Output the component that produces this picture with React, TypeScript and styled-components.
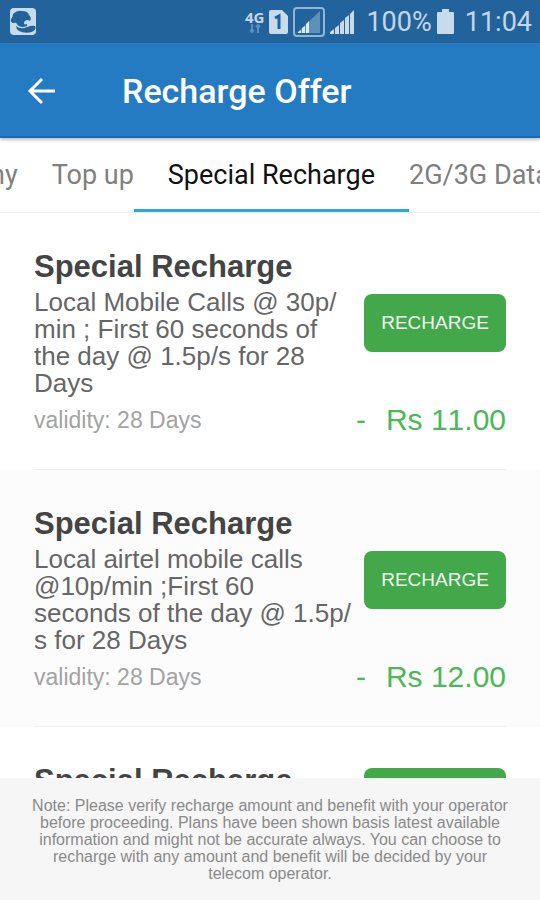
import styled, {createGlobalStyle, css} from "styled-components";

const GlobalStyle = createGlobalStyle`
* {
    box-sizing: border-box;
}
body {
    margin: 0;
    background: #ffffff;
    font-family: "Liberation Sans", Arial, sans-serif;
}
`;

const Screen = styled.div`
display: flex;
flex-direction: column;
height: 100vh;
overflow: hidden;
`;

const StatusBar = styled.div`
display: flex;
align-items: center;
justify-content: space-between;
flex-shrink: 0;
height: 43px;
padding: 0 8px 0 9px;
background: #22639b;
color: #c3d7e8;
font-family: Roboto, sans-serif;
font-size: 27px;
line-height: 32px;
`;

const StatusGroup = styled.div`
display: flex;
align-items: center;
gap: 5px;
`;

const Network = styled.div`
display: flex;
flex-direction: column;
align-items: center;
font-family: "Open Sans", sans-serif;
font-size: 15px;
font-weight: 700;
line-height: 14px;
`;

const StatusText = styled.span`
margin-left: 6px;
`;

const Header = styled.header`
display: flex;
align-items: center;
gap: 65px;
flex-shrink: 0;
height: 95px;
padding: 2px 25px 0;
background: #247bc1;
border-bottom: 2px solid #176bb0;
box-shadow: 0 2px 3px rgba(0, 0, 0, 0.25);
z-index: 1;
`;

const BackButton = styled.button`
display: flex;
padding: 0;
border: 0;
background: none;
color: #ffffff;
`;

const Heading = styled.h1`
margin: 0;
color: #ffffff;
font-family: Roboto, sans-serif;
font-size: 34px;
font-weight: 500;
line-height: 40px;
`;

const Tabs = styled.nav`
display: flex;
gap: 34px;
flex-shrink: 0;
height: 75px;
overflow: hidden;
border-bottom: 1px solid #ededed;
background: #ffffff;
`;

const Tab = styled.button<{$active?: boolean; $clipped?: boolean}>`
position: relative;
flex-shrink: 0;
padding: 0;
border: 0;
background: none;
color: #808080;
font-family: Roboto, sans-serif;
font-size: 27px;
line-height: 32px;
white-space: nowrap;
${({$clipped}) => $clipped && css`
    margin-left: -10px;
`}
${({$active}) => $active && css`
    color: #111111;
    &::after {
        content: "";
        position: absolute;
        left: -34px;
        right: -34px;
        bottom: 0;
        height: 3px;
        background: #2ba7df;
    }
`}
`;

const TabPanel = styled.main`
flex: 1;
min-height: 0;
overflow: hidden;
`;

const OfferList = styled.ul`
margin: 0;
padding: 0;
list-style: none;
`;

const OfferItem = styled.li`
padding: 0 34px;
&:nth-child(even) {
    background: #fcfcfc;
}
`;

const OfferBody = styled.article`
padding: 36px 0 31px;
border-bottom: 1px solid #f0f0f0;
`;

const OfferTop = styled.div`
display: flex;
align-items: center;
justify-content: space-between;
gap: 4px;
`;

const OfferTitle = styled.h2`
margin: 0 0 4px;
color: #444444;
font-size: 31px;
font-weight: 700;
line-height: 36px;
white-space: nowrap;
`;

const Description = styled.p`
margin: 0;
color: #666666;
font-size: 26px;
line-height: 27px;
white-space: pre-line;
`;

const RechargeButton = styled.button`
flex-shrink: 0;
width: 142px;
height: 58px;
padding: 0;
border: 0;
border-radius: 8px;
background: #42a84a;
color: #f1fbf1;
font-family: inherit;
font-size: 19px;
`;

const OfferBottom = styled.div`
display: flex;
align-items: center;
justify-content: space-between;
margin-top: 5px;
line-height: 36px;
`;

const Validity = styled.span`
color: #a3a3a3;
font-size: 23px;
`;

const Price = styled.span`
display: flex;
gap: 20px;
color: #4cb857;
font-size: 30px;
font-kerning: none;
`;

const Note = styled.footer`
flex-shrink: 0;
padding: 19px 24px 18px;
background: #f6f6f6;
color: #8a8a8a;
font-size: 16px;
line-height: 17px;
text-align: center;
`;

type Offer = {
    title: string;
    description: string;
    validity: string;
    price: string;
};

const offers: Offer[] = [
    {
        title: "Special Recharge",
        description: "Local Mobile Calls @ 30p/\nmin ; First 60 seconds of\nthe day @ 1.5p/s for 28\nDays",
        validity: "28 Days",
        price: "Rs 11.00",
    },
    {
        title: "Special Recharge",
        description: "Local airtel mobile calls\n@10p/min ;First 60\nseconds of the day @ 1.5p/\ns for 28 Days",
        validity: "28 Days",
        price: "Rs 12.00",
    },
];

const AppIcon = () => (
    <svg width="28" height="28" viewBox="0 0 28 28" aria-hidden="true">
        <rect x="1" y="0" width="26" height="27" rx="4" fill="#c8dbea" />
        <path d="M4 6 Q8 2 13 3 Q19 3 20 7 Q23 10 21 13 Q18 11 16 13 Q14 15 16 17 Q12 18 9 16 Q7 14 4 15 Q1 14 2 11 Q4 9 4 6Z" fill="#22639b" />
        <path d="M7 18 Q12 22 18 19 Q23 17 26 18 Q28 21 23 24 Q16 26 10 23 Q7 21 7 18Z" fill="#22639b" />
        <path d="M8 14 Q9 18 14 18 L18 17" stroke="#22639b" strokeWidth="2" fill="none" />
    </svg>
);

const DataArrows = () => (
    <svg width="14" height="10" viewBox="0 0 14 10" fill="none" stroke="#5f8fb8" strokeWidth="2" aria-hidden="true">
        <path d="M4 0 V8 M2 6 L4 8 L6 6 M10 9 V1 M8 3 L10 1 L12 3" />
    </svg>
);

const SimIcon = () => (
    <svg width="19" height="24" viewBox="0 0 19 24" aria-hidden="true">
        <path d="M2 0 H13 L19 6 V22 Q19 24 17 24 H2 Q0 24 0 22 V2 Q0 0 2 0Z" fill="#c8dbea" />
        <path d="M6 8 L10 6 V19" fill="none" stroke="#22639b" strokeWidth="3" />
    </svg>
);

const BoxedSignal = () => (
    <svg width="32" height="32" viewBox="0 0 32 32" aria-hidden="true">
        <rect x="1" y="2" width="30" height="28" rx="3" fill="none" stroke="#8fb6d8" strokeWidth="2" />
        <path d="M4 27 L27 5 V27Z" fill="#5f90b9" />
        <path d="M5 27 V26 L8 24 V27Z M9 27 V22 L12 20 V27Z M13 27 V18 L16 15 V27Z" fill="#dce9f3" />
    </svg>
);

const Signal = () => (
    <svg width="25" height="24" viewBox="0 0 25 24" fill="#c8dbea" aria-hidden="true">
        <path d="M0 24 V22 L4 19 V24Z M5 24 V18 L9 15 V24Z M10 24 V13 L14 10 V24Z M15 24 V8 L19 5 V24Z M20 24 V4 L24 0 V24Z" />
    </svg>
);

const Battery = () => (
    <svg width="17" height="25" viewBox="0 0 17 25" fill="#c8dbea" aria-hidden="true">
        <path d="M5 0 H12 V3 H16 Q17 3 17 4 V24 Q17 25 16 25 H1 Q0 25 0 24 V4 Q0 3 1 3 H5Z" />
    </svg>
);

const BackArrow = () => (
    <svg width="32" height="32" viewBox="0 0 32 32" fill="none" stroke="currentColor" strokeWidth="3" aria-hidden="true">
        <path d="M30 16 H5 M17 4 L5 16 L17 28" />
    </svg>
);

const OfferCard = ({title, description, validity, price}: Offer) => (
    <OfferItem>
        <OfferBody>
            <OfferTop>
                <div>
                    <OfferTitle>{title}</OfferTitle>
                    <Description>{description}</Description>
                </div>
                <RechargeButton type="button">RECHARGE</RechargeButton>
            </OfferTop>
            <OfferBottom>
                <Validity>validity: {validity}</Validity>
                <Price><span>-</span><span>{price}</span></Price>
            </OfferBottom>
        </OfferBody>
    </OfferItem>
);

// the last card sits under the note, only its top row shows
const PartialCard = () => (
    <OfferItem>
        <OfferBody>
            <OfferTop>
                <div>
                    <OfferTitle>Special Recharge</OfferTitle>
                    <Description>&nbsp;</Description>
                </div>
                <RechargeButton type="button" aria-label="Recharge" />
            </OfferTop>
        </OfferBody>
    </OfferItem>
);

const App = () => {
    return(<Screen>
        <GlobalStyle />
        <StatusBar>
            <AppIcon />
            <StatusGroup>
                <Network>4G<DataArrows /></Network>
                <SimIcon />
                <BoxedSignal />
                <Signal />
                <StatusText>100%</StatusText>
                <Battery />
                <StatusText>11:04</StatusText>
            </StatusGroup>
        </StatusBar>
        <Header>
            <BackButton type="button" aria-label="Back"><BackArrow /></BackButton>
            <Heading>Recharge Offer</Heading>
        </Header>
        <Tabs>
            <Tab type="button" $clipped>ny</Tab>
            <Tab type="button">Top up</Tab>
            <Tab type="button" $active>Special Recharge</Tab>
            <Tab type="button">2G/3G Data</Tab>
        </Tabs>
        <TabPanel>
            <OfferList>
                {offers.map((offer, index) => <OfferCard key={index} {...offer} />)}
                <PartialCard />
            </OfferList>
        </TabPanel>
        <Note>
            Note: Please verify recharge amount and benefit with your operator before proceeding. Plans have been shown basis latest available information and might not be accurate always. You can choose to recharge with any amount and benefit will be decided by your telecom operator.
        </Note>
    </Screen>);
};

export default App;
